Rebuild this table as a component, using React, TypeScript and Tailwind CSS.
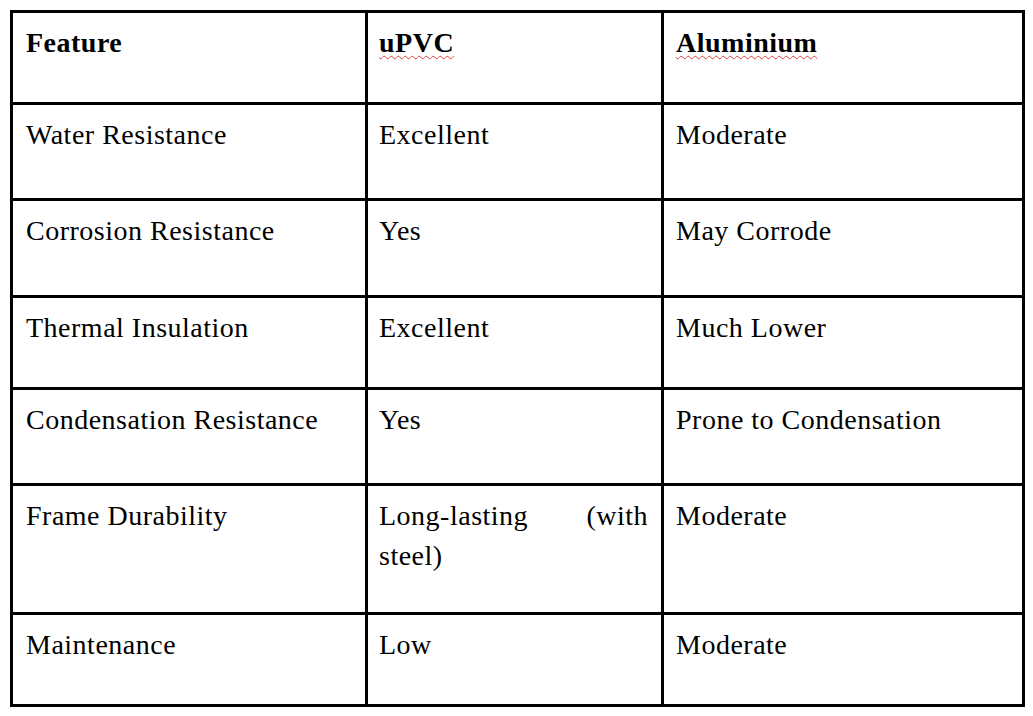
import React from 'react';

const rows: { cells: string[]; h: string; head?: boolean }[] = [
  { cells: ['Feature', 'uPVC', 'Aluminium'], h: 'h-[89px]', head: true },
  { cells: ['Water Resistance', 'Excellent', 'Moderate'], h: 'h-[93px]' },
  { cells: ['Corrosion Resistance', 'Yes', 'May Corrode'], h: 'h-[94px]' },
  { cells: ['Thermal Insulation', 'Excellent', 'Much Lower'], h: 'h-[89px]' },
  { cells: ['Condensation Resistance', 'Yes', 'Prone to Condensation'], h: 'h-[93px]' },
  { cells: ['Frame Durability', 'Long-lasting (with steel)', 'Moderate'], h: 'h-[126px]' },
  { cells: ['Maintenance', 'Low', 'Moderate'], h: 'h-[89px]' },
];

const pad = ['pl-[13px] pr-3', 'pl-[11px] pr-[13px]', 'pl-3 pr-3'];

export default function App() {
  return (
    <div className="min-h-screen bg-white pt-[10px] pl-[10px] font-['Liberation_Serif','Times_New_Roman',serif] text-black">
      <div className="inline-grid grid-cols-[352px_293px_358px] gap-[3px] bg-black p-[3px]">
        {rows.map((row, r) =>
          row.cells.map((text, c) => (
            <div
              key={`${r}-${c}`}
              className={`${row.h} ${pad[c]} bg-white pt-[10px] text-[28px] leading-[40px] tracking-[0.5px] text-justify`}
            >
              {row.head ? (
                c === 0 ? (
                  <span className="font-bold">{text}</span>
                ) : (
                  <span className="font-bold underline decoration-wavy decoration-[#e04040] decoration-1 underline-offset-[3px]">
                    {text}
                  </span>
                )
              ) : (
                text
              )}
            </div>
          ))
        )}
      </div>
    </div>
  );
}
